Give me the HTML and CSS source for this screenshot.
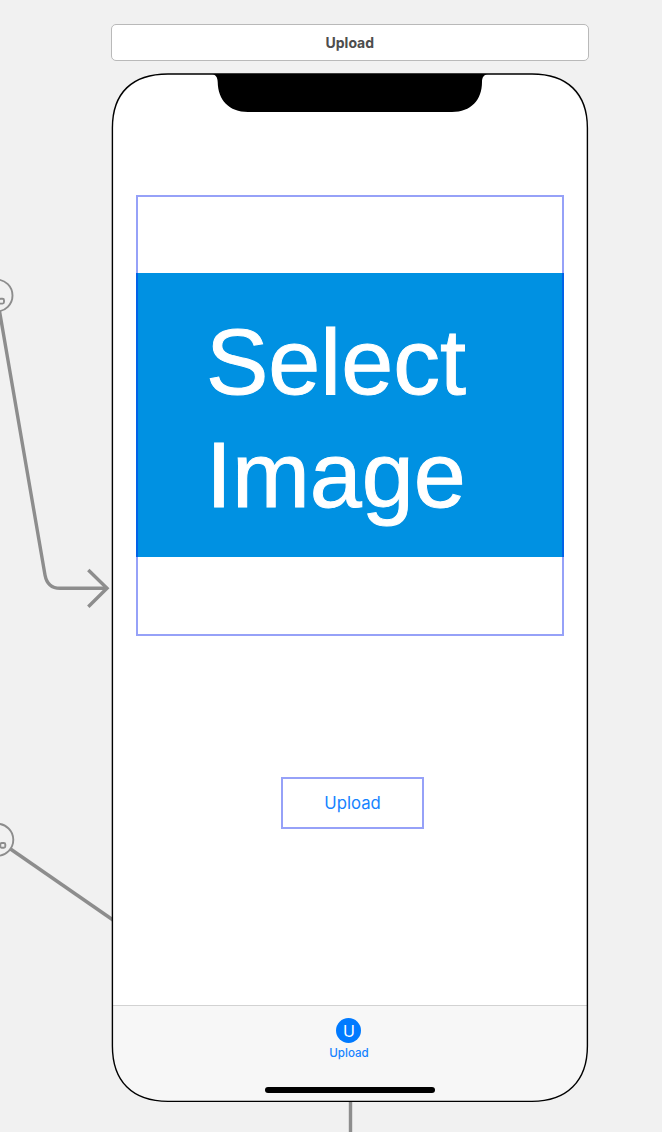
FILE: index.html
```html
<!DOCTYPE html>
<html lang="en">
<head>
<meta charset="utf-8">
<title>Upload scene</title>
<link rel="stylesheet" href="styles.css">
</head>
<body>
<main class="canvas">
  <svg class="segues" viewBox="0 0 662 1132" fill="none" stroke="#8d8d8d" stroke-width="3.4">
    <path d="M-0.5 311 L45 575 Q47.5 588.3 60 588.3 H107"/>
    <path d="M88.3 570 L107 588.3 L88.3 606.7"/>
    <path d="M10.5 849 L113 920"/>
    <path d="M350.5 1100 V1132"/>
    <g stroke-width="1.9">
      <circle cx="-3.5" cy="295.5" r="16"/>
      <rect x="-1" y="298.8" width="5" height="4.8" rx="1.5"/>
      <circle cx="-2.7" cy="839.8" r="16"/>
      <rect x="0.3" y="843" width="5" height="4.8" rx="1.5"/>
    </g>
  </svg>
  <section class="scene">
    <header class="scene-title">Upload</header>
    <div class="phone">
      <div class="screen">
        <div class="image-view"><div class="placeholder"><span>Select</span><span>Image</span></div></div>
        <button class="upload-button">Upload</button>
        <nav class="tab-bar">
          <div class="tab"><span class="tab-icon">U</span><span class="tab-label">Upload</span></div>
          <div class="home-indicator"></div>
        </nav>
      </div>
      <svg class="bezel" viewBox="0 0 478 1030">
        <path d="M102 1 C106 1.5 107.7 5 107.7 9 C108 27 119 39 138 39 H342 C361 39 372 27 372 9 C372 5 373.5 1.5 378 1 Z"/>
        <path d="M58 1 H422 C457 1 477.4 20 477.4 55 V973 C477.4 1008 457 1028.4 422 1028.4 H58 C22 1028.4 2.4 1008 2.4 973 V55 C2.4 20 22 1 58 1 Z" fill="none" stroke="#000" stroke-width="1.4"/>
      </svg>
    </div>
  </section>
</main>
</body>
</html>
```
FILE: styles.css
```css
* { box-sizing: border-box; }
body { margin: 0; background: #f1f1f1; font-family: Inter, "Liberation Sans", sans-serif; }
.canvas { position: relative; width: 662px; height: 1132px; overflow: hidden; }
.segues { position: absolute; inset: 0; width: 662px; height: 1132px; }
.scene { position: relative; display: flex; flex-direction: column; gap: 12px; width: 479px; margin-left: 110px; padding-top: 24px; }
.scene-title {
  display: flex; align-items: center; justify-content: center; height: 37px; margin-left: 0.6px;
  background: #fff; border: 1.4px solid #b9b9b9; border-radius: 5px;
  color: #4d4d4d; font-size: 14px; font-weight: 700; padding-bottom: 1px;
}
.phone { position: relative; width: 478px; height: 1030px; padding: 1px 1px 1px 2px; }
.bezel { position: absolute; inset: 0; width: 478px; height: 1030px; overflow: visible; }
.screen {
  display: flex; flex-direction: column; height: 1028px; overflow: hidden;
  background: #fff; border-radius: 52px; padding-top: 121px;
}
.image-view {
  display: flex; flex-direction: column;
  width: 428px; height: 441px; margin-left: 24px; padding-top: 76px; border: 2px solid #96a1f8;
}
.placeholder {
  display: flex; flex-direction: column; height: 284px; margin: 0 -2px; padding: 32px 0 0 68px;
  background: #0091e2; color: #fff; border: solid #0063e8; border-width: 0 2px;
  font: 93.5px/113px "Liberation Sans", sans-serif; -webkit-text-stroke: 1px #fff;
}
.upload-button {
  width: 143px; height: 52px; margin: 141px 0 0 169px; padding: 0;
  background: #fff; border: 2px solid #96a1f8; color: #1683ff; font: 16.7px Inter, sans-serif;
}
.tab-bar {
  display: flex; flex-direction: column; align-items: center; justify-content: space-between;
  height: 97px; margin-top: auto; padding: 12px 0 9px; background: #f7f7f7; border-top: 1px solid #d2d2d2;
}
.tab { display: flex; flex-direction: column; align-items: center; gap: 3px; color: #1683ff; margin-left: -1px; }
.tab-icon {
  display: flex; align-items: center; justify-content: center; width: 25px; height: 25px;
  border-radius: 50%; background: #007aff; color: #fff; font-size: 16px;
}
.tab-label { font-size: 11.6px; line-height: 14px; font-weight: 500; }
.home-indicator { width: 170px; height: 6px; border-radius: 3px; background: #000; }
```
